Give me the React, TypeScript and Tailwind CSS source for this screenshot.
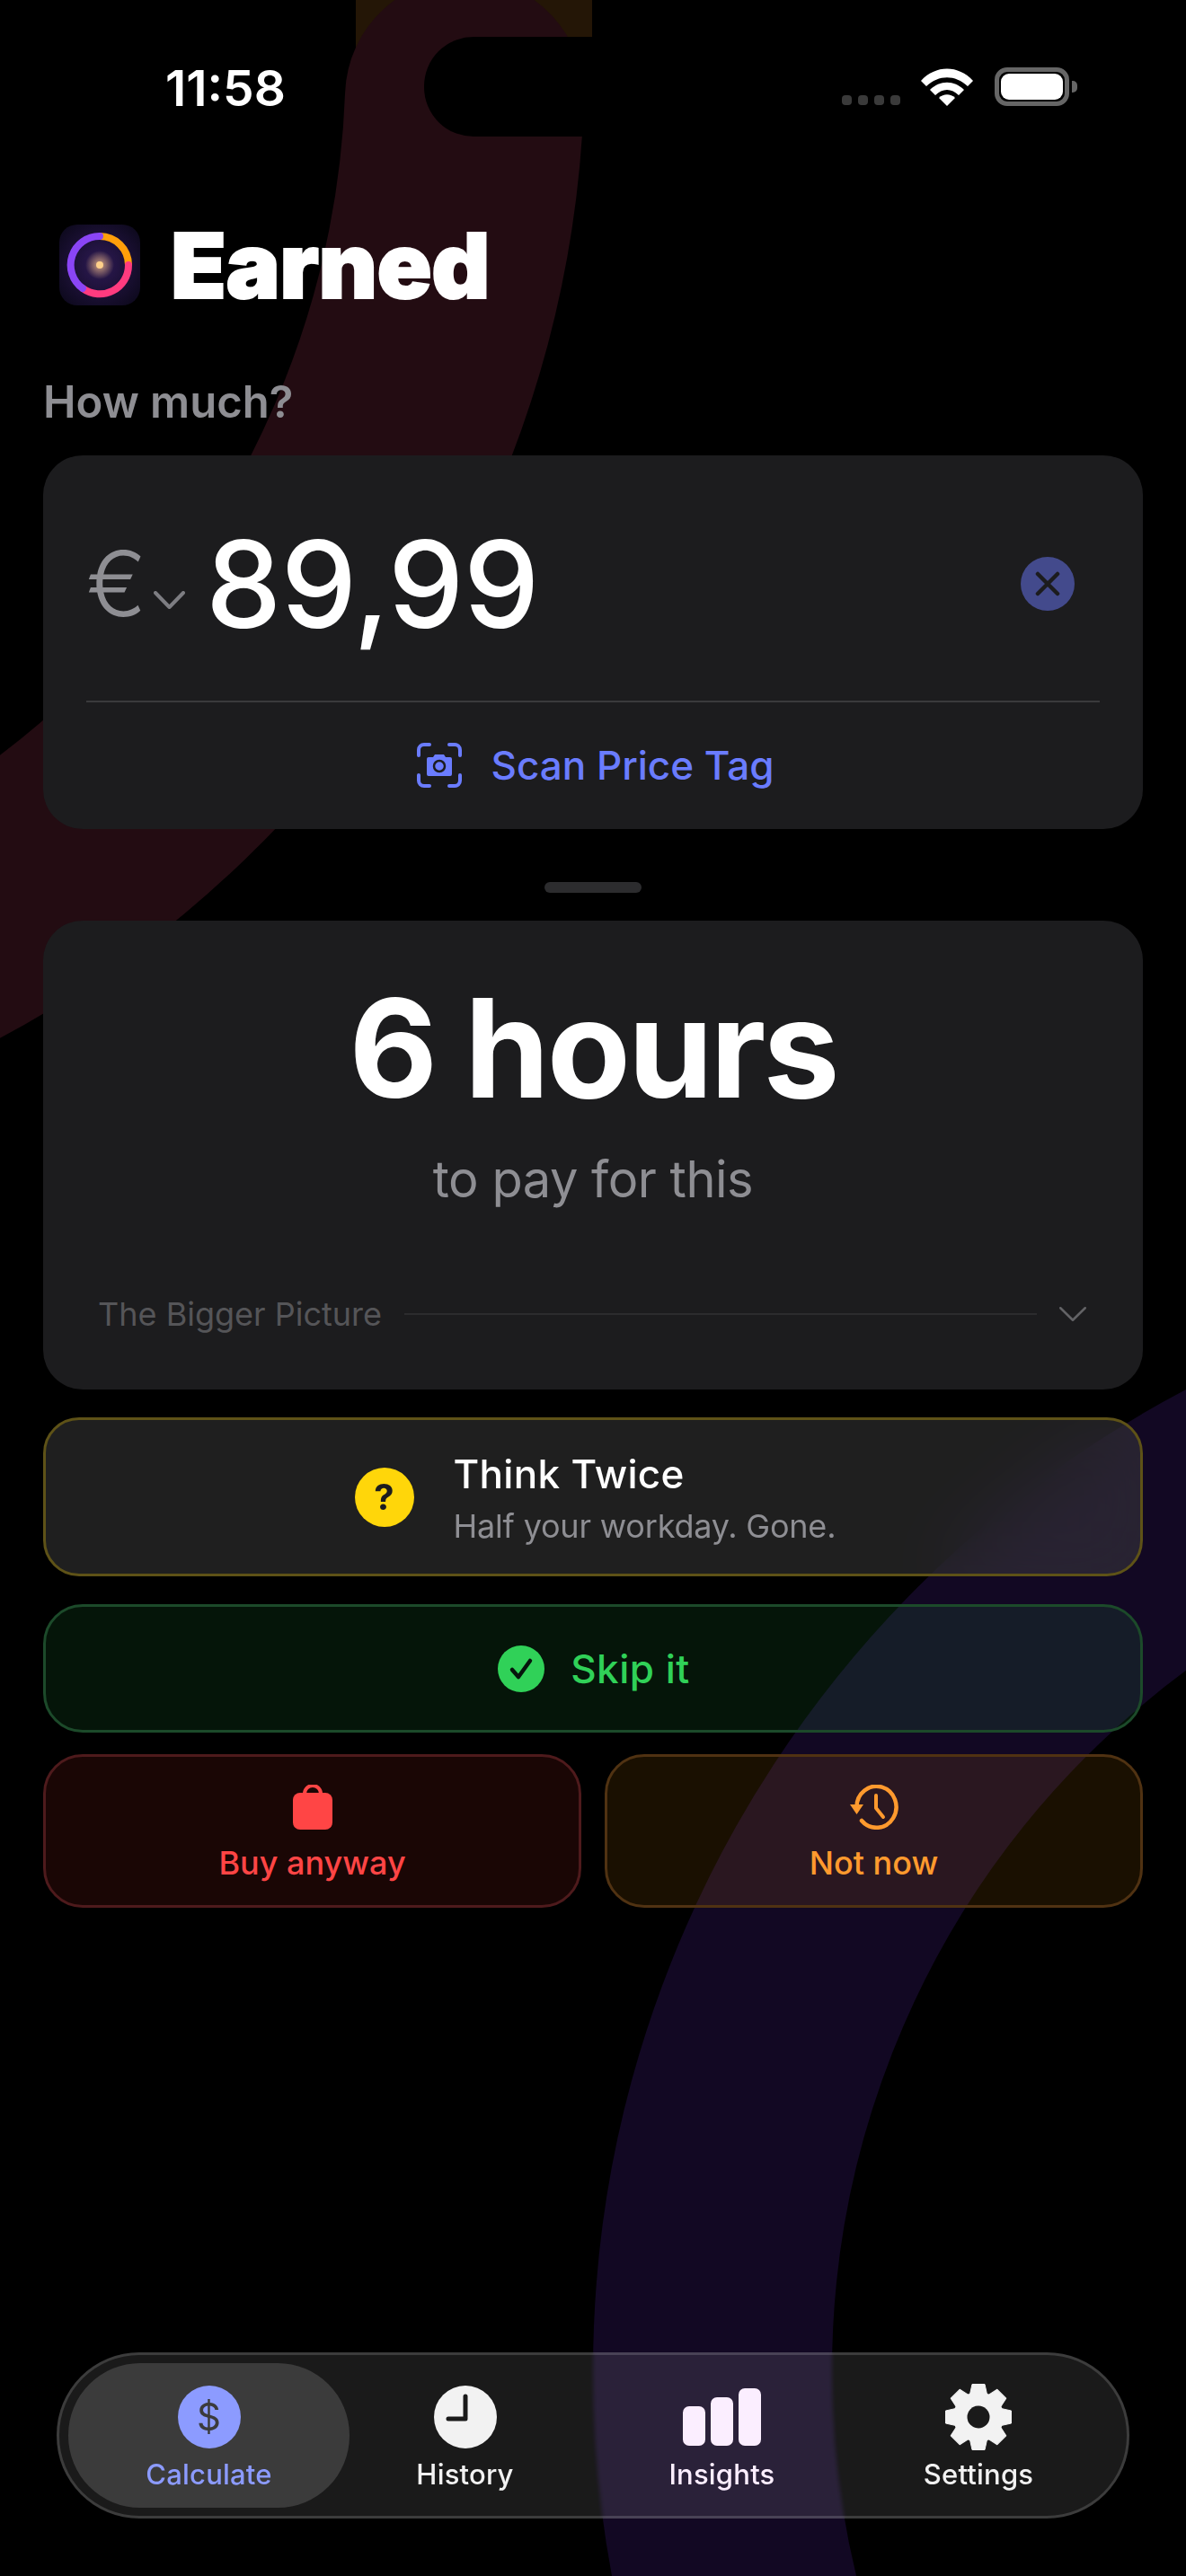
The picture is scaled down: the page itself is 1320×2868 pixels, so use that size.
const fontStack = { fontFamily: 'Inter, "Liberation Sans", sans-serif' };

function Backdrop() {
  return (
    <svg className="absolute inset-0" width="1320" height="2868" viewBox="0 0 1320 2868" fill="none">
      <rect x="396" y="0" width="263" height="68" fill="#241606" />
      <path d="M517 108 A1103 1103 0 0 1 -585 1170" stroke="#230c12" strokeWidth="266" strokeLinecap="round" />
      <circle cx="1895" cy="2640" r="1102" stroke="#120823" strokeWidth="266" />
    </svg>
  );
}

function StatusBar() {
  return (
    <div className="relative h-[250px] shrink-0">
      <div className="absolute left-[472px] top-[41px] h-[111px] w-[400px] rounded-[55px] bg-black" />
      <div className="absolute left-[184px] top-[66px] text-[55px] leading-[64px] font-semibold text-white">11:58</div>
      <div className="absolute left-[937px] top-[75px] flex items-end gap-[25px]">
        <div className="flex gap-[7px] pb-[1px]">
          {[0, 1, 2, 3].map((d) => (
            <div key={d} className="h-[11px] w-[11px] rounded-[4px] bg-[#3a3a3a]" />
          ))}
        </div>
        <svg width="58" height="42" viewBox="0 0 58 42" className="-ml-[2px]">
          <path d="M0 14 C16 -4 42 -4 58 14 L52 20 C38 7 20 7 6 20 Z" fill="#fff" />
          <path d="M10 24 C21 13 37 13 48 24 L42 30 C34 22 24 22 16 30 Z" fill="#fff" />
          <path d="M20 33 C25 28 33 28 38 33 L29 42 Z" fill="#fff" />
        </svg>
        <div className="-ml-[1px] flex items-center gap-[3px]">
          <div className="h-[43px] w-[83px] rounded-[14px] border-[5px] border-[#666] p-[2px]">
            <div className="h-full w-full rounded-[9px] bg-white" />
          </div>
          <div className="h-[13px] w-[6px] rounded-r-[5px] bg-[#666]" />
        </div>
      </div>
    </div>
  );
}

function Logo() {
  return (
    <svg width="90" height="90" viewBox="0 0 90 90" className="shrink-0">
      <defs>
        <radialGradient id="tile" cx="50%" cy="50%" r="60%">
          <stop offset="0%" stopColor="#2e1a55" />
          <stop offset="100%" stopColor="#0f0a20" />
        </radialGradient>
        <radialGradient id="glow" cx="50%" cy="50%" r="50%">
          <stop offset="0%" stopColor="#ffc98a" stopOpacity="0.75" />
          <stop offset="100%" stopColor="#ffc98a" stopOpacity="0" />
        </radialGradient>
      </defs>
      <rect width="90" height="90" rx="20" fill="url(#tile)" />
      <circle cx="45" cy="45" r="16" fill="url(#glow)" />
      <circle cx="45" cy="45" r="4" fill="#ffd08a" />
      <path d="M45 13 A32 32 0 0 1 77 45" fill="none" stroke="#ff9f0a" strokeWidth="8" />
      <path d="M77 45 A32 32 0 0 1 26 71" fill="none" stroke="#ff3b7f" strokeWidth="8" strokeLinecap="round" />
      <path d="M26 71 A32 32 0 0 1 45 13" fill="none" stroke="#8a45f5" strokeWidth="8" strokeLinecap="round" />
    </svg>
  );
}

function ScanIcon() {
  return (
    <svg width="50" height="50" viewBox="0 0 50 50" fill="none">
      <path
        d="M2 14 V8 A6 6 0 0 1 8 2 H14 M36 2 H42 A6 6 0 0 1 48 8 V14 M48 36 V42 A6 6 0 0 1 42 48 H36 M14 48 H8 A6 6 0 0 1 2 42 V36"
        stroke="#6a7cff"
        strokeWidth="4"
        strokeLinecap="round"
      />
      <path
        d="M13 16 H18 L20 13 H30 L32 16 H37 A2 2 0 0 1 39 18 V35 A2 2 0 0 1 37 37 H13 A2 2 0 0 1 11 35 V18 A2 2 0 0 1 13 16 Z"
        fill="#6a7cff"
      />
      <circle cx="25" cy="26" r="6" fill="none" stroke="#1c1c1e" strokeWidth="2.5" />
    </svg>
  );
}

function Chevron({ w, h, color, stroke }: { w: number; h: number; color: string; stroke: number }) {
  return (
    <svg width={w} height={h} viewBox={`0 0 ${w} ${h}`} fill="none" className="shrink-0">
      <path
        d={`M${stroke / 2} ${stroke / 2} L${w / 2} ${h - stroke / 2} L${w - stroke / 2} ${stroke / 2}`}
        stroke={color}
        strokeWidth={stroke}
        strokeLinecap="round"
        strokeLinejoin="round"
      />
    </svg>
  );
}

function AmountCard() {
  return (
    <div className="mt-[31px] h-[416px] rounded-[44px] bg-[#1c1c1e]">
      <div className="flex h-[273px] items-center pt-[13px] pr-[76px] pl-[48px]">
        <span className="w-[70px] text-[100px] leading-[110px] font-light text-[#8e8e93]">€</span>
        <div className="mt-[36px] ml-[5px]">
          <Chevron w={35} h={20} color="#7d7d82" stroke={4} />
        </div>
        <span className="ml-[23px] text-[134px] leading-[140px] font-[550] tracking-[-0.5px] text-white">89,99</span>
        <div className="ml-auto flex h-[60px] w-[60px] items-center justify-center rounded-full bg-[#434a8c]">
          <svg width="28" height="28" viewBox="0 0 28 28" fill="none">
            <path d="M3 3 L25 25 M25 3 L3 25" stroke="#1c1c1e" strokeWidth="4.5" strokeLinecap="round" />
          </svg>
        </div>
      </div>
      <div className="mx-[48px] h-[2px] bg-[#3a3a3c]" />
      <div className="flex h-[140px] items-center justify-center gap-[32px] pl-[6px]">
        <ScanIcon />
        <span className="text-[44px] leading-[52px] font-medium text-[#6a7cff]">Scan Price Tag</span>
      </div>
    </div>
  );
}

function HoursCard() {
  return (
    <div className="h-[522px] rounded-[44px] bg-[#1c1c1e] pt-[66px]">
      <div className="text-center text-[152px] leading-[152px] font-bold tracking-[-3px] text-white">6 hours</div>
      <div className="mt-[36px] text-center text-[56px] leading-[68px] tracking-[-0.5px] text-[#8e8e93]">to pay for this</div>
      <div className="mt-[94px] flex h-[44px] items-center pr-[63px] pl-[61px]">
        <span className="text-[36px] leading-[44px] text-[#555558]">The Bigger Picture</span>
        <div className="mx-[25px] h-[2px] flex-1 bg-[#2c2c2e]" />
        <Chevron w={30} h={16} color="#636366" stroke={2.5} />
      </div>
    </div>
  );
}

function Actions() {
  return (
    <div className="mt-[31px] flex flex-col">
      <div className="flex h-[177px] items-center justify-center gap-[44px] rounded-[40px] border-[3px] border-[#5e5217] bg-[#454545]/45 backdrop-blur-[40px]">
        <div className="flex h-[66px] w-[66px] items-center justify-center rounded-full bg-[#ffd60a] text-[40px] leading-none font-bold text-[#1c1c1e]">
          ?
        </div>
        <div className="w-[421px] pt-[2px]">
          <div className="text-[44px] leading-[54px] font-medium tracking-[0.3px] whitespace-nowrap text-white">Think Twice</div>
          <div className="mt-[9px] text-[36px] leading-[44px] tracking-[-0.2px] whitespace-nowrap text-[#8e8e93]">
            Half your workday. Gone.
          </div>
        </div>
      </div>

      <div className="mt-[31px] flex h-[143px] items-center justify-center gap-[29px] rounded-[44px] border-[3px] border-[#1c4a2a] bg-[#30d158]/10 pl-[2px]">
        <svg width="52" height="52" viewBox="0 0 52 52" fill="none">
          <circle cx="26" cy="26" r="26" fill="#30d158" />
          <path d="M16 27 L23 35 L36 17" stroke="#06150c" strokeWidth="4.5" strokeLinecap="round" strokeLinejoin="round" />
        </svg>
        <span className="text-[44px] leading-[52px] font-medium tracking-[0.5px] text-[#30d158]">Skip it</span>
      </div>

      <div className="mt-[24px] grid grid-cols-2 gap-[26px]">
        <div className="flex h-[171px] flex-col items-center rounded-[44px] border-[3px] border-[#4e1a1c] bg-[#ff3b30]/10 pt-[31px]">
          <svg width="44" height="50" viewBox="0 0 44 50" fill="none">
            <path d="M13 12 V10 A9 9 0 0 1 31 10 V12" stroke="#ff4545" strokeWidth="4" />
            <rect x="0" y="9" width="44" height="41" rx="8" fill="#ff4545" />
          </svg>
          <span className="mt-[15px] text-[36px] leading-[44px] font-medium text-[#ff4545]">Buy anyway</span>
        </div>
        <div className="flex h-[171px] flex-col items-center rounded-[44px] border-[3px] border-[#503212] bg-[#ff9f0a]/10 pt-[31px]">
          <svg width="54" height="50" viewBox="0 0 54 50" fill="none">
            <path d="M7.5 25 A22 23 0 1 1 13 40" stroke="#ff9a2e" strokeWidth="4.5" strokeLinecap="round" />
            <path d="M0 22 H15 L7.5 33 Z" fill="#ff9a2e" />
            <path d="M29 12 V26 L37 36" stroke="#ff9a2e" strokeWidth="4" strokeLinecap="round" strokeLinejoin="round" />
          </svg>
          <span className="mt-[15px] text-[36px] leading-[44px] font-medium text-[#ff9a2e]">Not now</span>
        </div>
      </div>
    </div>
  );
}

function Gear() {
  return (
    <svg width="74" height="74" viewBox="0 0 74 74">
      <circle cx="37" cy="37" r="28" fill="#f2f2f2" />
      {[0, 45, 90, 135, 180, 225, 270, 315].map((a) => (
        <path
          key={a}
          d="M30 0.5 H44 L47 14 H27 Z"
          fill="#f2f2f2"
          stroke="#f2f2f2"
          strokeWidth="1"
          strokeLinejoin="round"
          transform={`rotate(${a} 37 37)`}
        />
      ))}
      <circle cx="37" cy="37" r="12.5" fill="#1a1a1a" />
    </svg>
  );
}

function TabBar() {
  return (
    <div className="mx-[15px] mb-[64px] h-[185px] rounded-[92px] border-[3px] border-white/15 bg-white/10 px-[24px] py-[9px] backdrop-blur-[2px]">
      <div className="grid h-[161px] grid-cols-4">
        <div className="-mx-[14px] flex flex-col items-center rounded-[80px] bg-[#3b3b3b] pt-[25px]">
          <div className="flex h-[70px] w-[70px] items-center justify-center rounded-full bg-[#8c9bff] text-[42px] leading-none text-[#3b3b3b]">
            $
          </div>
          <span className="mt-[9px] text-[31px] leading-[40px] font-medium tracking-[0.2px] text-[#8c9bff]">Calculate</span>
        </div>
        <div className="flex flex-col items-center pt-[25px]">
          <svg width="70" height="70" viewBox="0 0 70 70" fill="none">
            <circle cx="35" cy="35" r="35" fill="#f2f2f2" />
            <path d="M35 12 V37 H16" stroke="#1a1a1a" strokeWidth="5" strokeLinecap="round" strokeLinejoin="round" />
          </svg>
          <span className="mt-[9px] text-[31px] leading-[40px] font-medium tracking-[0.2px] text-[#f2f2f2]">History</span>
        </div>
        <div className="flex flex-col items-center pt-[28px] pl-[2px]">
          <div className="flex h-[64px] items-end gap-[6px]">
            <div className="h-[44px] w-[25px] rounded-[7px] bg-[#fbeeff]" />
            <div className="h-[54px] w-[25px] rounded-[7px] bg-[#fbeeff]" />
            <div className="h-[64px] w-[25px] rounded-[7px] bg-[#fbeeff]" />
          </div>
          <span className="mt-[12px] text-[31px] leading-[40px] font-medium tracking-[0.2px] text-[#fbeeff]">Insights</span>
        </div>
        <div className="flex flex-col items-center pt-[23px] pl-[3px]">
          <Gear />
          <span className="mt-[7px] text-[31px] leading-[40px] font-medium tracking-[0.2px] text-[#f2f2f2]">Settings</span>
        </div>
      </div>
    </div>
  );
}

export default function App() {
  return (
    <div className="relative h-[2868px] w-[1320px] overflow-hidden bg-black" style={fontStack}>
      <Backdrop />
      <div className="relative flex h-full flex-col">
        <StatusBar />
        <div className="flex flex-col px-[48px]">
          <div className="flex h-[90px] items-center gap-[34px] pl-[18px]">
            <Logo />
            <span className="text-[101px] leading-[90px] font-black tracking-[-0.5px] text-white [-webkit-text-stroke:2px_white]">
              Earned
            </span>
          </div>
          <div className="mt-[80px] text-[49px] leading-[56px] font-semibold text-[#8e8e93]">How much?</div>
          <AmountCard />
          <div className="mx-auto mt-[59px] mb-[31px] h-[12px] w-[108px] rounded-full bg-[#2c2c2e]" />
          <HoursCard />
          <Actions />
        </div>
        <div className="mt-auto flex flex-col px-[48px]">
          <TabBar />
        </div>
      </div>
    </div>
  );
}
